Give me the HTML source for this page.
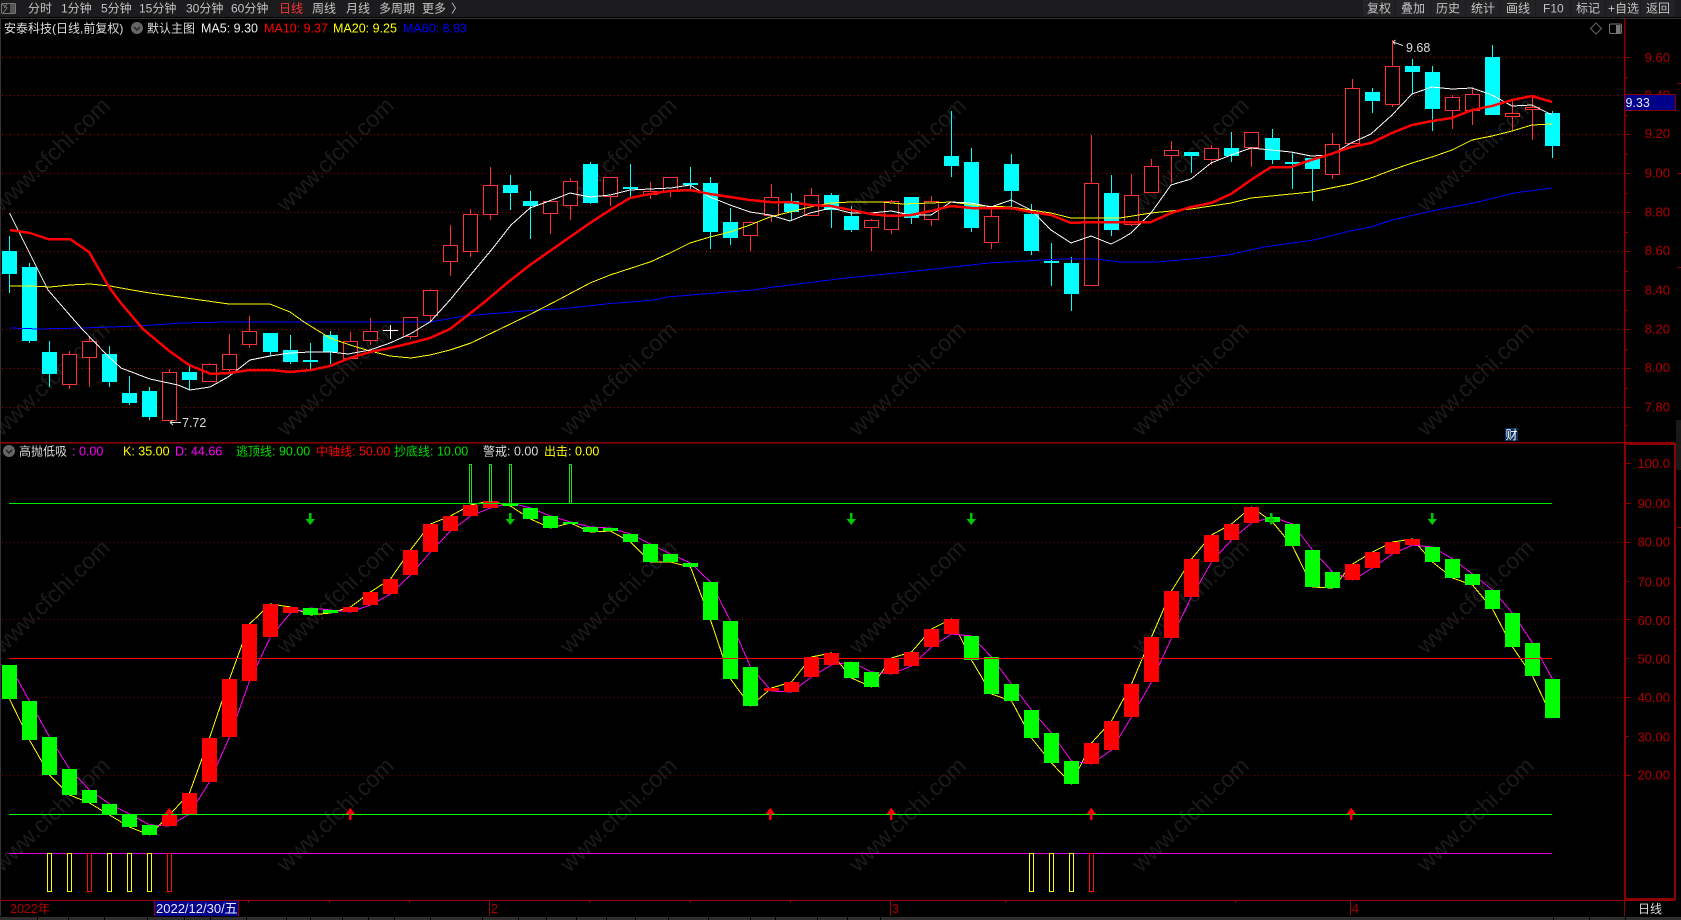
<!DOCTYPE html>
<html lang="zh-CN">
<head>
<meta charset="utf-8">
<title>安泰科技 日线</title>
<style>
html,body{margin:0;padding:0;background:#000;width:1681px;height:920px;overflow:hidden}
svg{display:block;font-family:"Liberation Sans","Noto Sans CJK SC",sans-serif}
.tb{font-size:12px;fill:#c4c4c4}
.ax{font-size:13px;fill:#b00000;text-anchor:end}
.wm{font-size:23px;fill:#1b1b1b}
.t{font-size:12.5px}
.c{font-size:12px}
</style>
</head>
<body>
<svg width="1681" height="920" viewBox="0 0 1681 920" xmlns="http://www.w3.org/2000/svg">
<rect width="1681" height="920" fill="#000"/>
<!-- watermarks -->
<g class="wm">
<text transform="translate(2,213) rotate(-44)">www.cfchi.com</text><text transform="translate(286,213) rotate(-44)">www.cfchi.com</text><text transform="translate(569,213) rotate(-44)">www.cfchi.com</text><text transform="translate(858,213) rotate(-44)">www.cfchi.com</text><text transform="translate(1141,213) rotate(-44)">www.cfchi.com</text><text transform="translate(1426,213) rotate(-44)">www.cfchi.com</text>
<text transform="translate(2,437) rotate(-44)">www.cfchi.com</text><text transform="translate(286,437) rotate(-44)">www.cfchi.com</text><text transform="translate(569,437) rotate(-44)">www.cfchi.com</text><text transform="translate(858,437) rotate(-44)">www.cfchi.com</text><text transform="translate(1141,437) rotate(-44)">www.cfchi.com</text><text transform="translate(1426,437) rotate(-44)">www.cfchi.com</text>
<text transform="translate(2,655) rotate(-44)">www.cfchi.com</text><text transform="translate(286,655) rotate(-44)">www.cfchi.com</text><text transform="translate(569,655) rotate(-44)">www.cfchi.com</text><text transform="translate(858,655) rotate(-44)">www.cfchi.com</text><text transform="translate(1141,655) rotate(-44)">www.cfchi.com</text><text transform="translate(1426,655) rotate(-44)">www.cfchi.com</text>
<text transform="translate(2,873) rotate(-44)">www.cfchi.com</text><text transform="translate(286,873) rotate(-44)">www.cfchi.com</text><text transform="translate(569,873) rotate(-44)">www.cfchi.com</text><text transform="translate(858,873) rotate(-44)">www.cfchi.com</text><text transform="translate(1141,873) rotate(-44)">www.cfchi.com</text><text transform="translate(1426,873) rotate(-44)">www.cfchi.com</text>
</g>
<!-- toolbar -->
<rect x="0" y="0" width="1681" height="17" fill="#1c1c1e"/>
<rect x="0" y="17" width="1681" height="1" fill="#000"/>
<rect x="0" y="18" width="1681" height="1" fill="#333"/>
<rect x="0" y="19" width="1" height="897" fill="#333"/>
<path d="M1363 0h31v17h-31zM1396 0h34v17h-34zM1431 0h34v17h-34zM1466 0h34v17h-34zM1501 0h34v17h-34zM1536 0h34v17h-34zM1571 0h34v17h-34zM1606 0h34v17h-34zM1641 0h34v17h-34z" fill="#232326"/>
<g fill="none" stroke="#777" stroke-width="1">
<rect x="1.5" y="3.5" width="14" height="10" rx="1"/>
<path d="M2 4l5 4-4 5M7 4l-3 4"/>
</g>
<rect x="10" y="4" width="5" height="9" fill="#555"/>
<g class="tb">
<text x="28" y="12.5">分时</text><text x="61" y="12.5">1分钟</text><text x="101" y="12.5">5分钟</text><text x="139" y="12.5">15分钟</text><text x="186" y="12.5">30分钟</text><text x="231" y="12.5">60分钟</text>
<text x="279" y="12.5" style="fill:#ff3232">日线</text><text x="312" y="12.5">周线</text><text x="346" y="12.5">月线</text><text x="379" y="12.5">多周期</text><text x="422" y="12.5">更多</text><text x="451" y="12.5">〉</text>
<text x="1367" y="12.5">复权</text><text x="1401" y="12.5">叠加</text><text x="1436" y="12.5">历史</text><text x="1471" y="12.5">统计</text><text x="1506" y="12.5">画线</text><text x="1543" y="12.5">F10</text><text x="1576" y="12.5">标记</text><text x="1608" y="12.5">+自选</text><text x="1646" y="12.5">返回</text>
</g>
<!-- title row -->
<text x="4" y="32.5" class="c" fill="#ddd">安泰科技(日线,前复权)</text>
<circle cx="137" cy="28" r="6" fill="#666"/><path d="M134 27l3 3 3-3" fill="none" stroke="#222" stroke-width="1.4"/>
<text x="147" y="32.5" class="c" fill="#ddd">默认主图</text>
<text x="201" y="32.5" class="t" fill="#eee">MA5: 9.30</text>
<text x="264" y="32.5" class="t" fill="#f00">MA10: 9.37</text>
<text x="333" y="32.5" class="t" fill="#ff0">MA20: 9.25</text>
<text x="403" y="32.5" class="t" fill="#00f">MA60: 8.93</text>
<path d="M1596 23l5.500 5.500-5.500 5.500-5.500-5.500z" fill="none" stroke="#666"/>
<rect x="1609.500" y="24" width="12" height="9.500" rx="1.500" fill="none" stroke="#777"/><rect x="1616" y="25" width="4.500" height="8" fill="#777"/>

<g shape-rendering="crispEdges">
<!-- upper grid -->
<path d="M2 57.500H1624M2 95.500H1624M2 134.500H1624M2 173.500H1624M2 212.500H1624M2 251.500H1624M2 290.500H1624M2 329.500H1624M2 368.500H1624M2 407.500H1624" stroke="#9a0000" stroke-dasharray="1 3" fill="none"/>
<!-- lower grid -->
<path d="M2 542.500H1624M2 619.500H1624M2 697.500H1624M2 775.500H1624" stroke="#7c0000" stroke-dasharray="1 3" fill="none"/>

<!-- cyan wicks -->
<path stroke="#0ff" fill="none" d="M9.500 236V293M29.500 263V343M49.500 341V387M109.500 346V387M129.500 376V405M149.500 387V420M189.500 366V390M270.500 333V356M290.500 335V364M310.500 343V369M330.500 331V364M510.500 175V210M530.500 191V239M590.500 162V204M630.500 164V199M690.500 167V190M710.500 177V249M730.500 208V245M791.500 193V221M831.500 193V228M851.500 206V232M911.500 197V224M951.500 111V177M971.500 148V232M1011.500 154V210M1031.500 204V255M1051.500 243V286M1071.500 257V311M1111.500 175V236M1191.500 152V173M1231.500 132V162M1272.500 129V164M1292.500 153V189M1312.500 158V201M1372.500 88V113M1412.500 59V94M1432.500 66V131M1492.500 45V115M1552.500 111V158"/>
<!-- cyan bodies -->
<path fill="#0ff" d="M2 251h15v23h-15zM22 267h15v74h-15zM42 352h15v22h-15zM102 354h15v28h-15zM122 393h15v10h-15zM142 391h15v26h-15zM182 372h15v8h-15zM263 333h15v19h-15zM283 350h15v12h-15zM303 360h15v2h-15zM323 335h15v17h-15zM503 185h15v8h-15zM523 201h15v5h-15zM583 164h15v39h-15zM623 187h15v2h-15zM683 183h15v2h-15zM703 183h15v49h-15zM723 222h15v16h-15zM784 201h15v11h-15zM824 195h15v15h-15zM844 216h15v14h-15zM904 197h15v21h-15zM944 156h15v10h-15zM964 162h15v66h-15zM1004 164h15v27h-15zM1024 214h15v37h-15zM1044 261h15v2h-15zM1064 263h15v31h-15zM1104 193h15v37h-15zM1184 152h15v4h-15zM1224 148h15v8h-15zM1265 138h15v22h-15zM1285 162h15v2h-15zM1305 158h15v11h-15zM1365 92h15v9h-15zM1405 66h15v6h-15zM1425 72h15v37h-15zM1485 57h15v58h-15zM1545 113h15v33h-15z"/>
<!-- red wicks -->
<path stroke="#ff3232" fill="none" d="M69.500 351V389M89.500 337V387M169.500 369V421M209.500 363V382M229.500 334V373M249.500 316V348M350.500 332V359M370.500 318V345M410.500 317V339M430.500 289V322M450.500 225V276M470.500 209V257M490.500 167V220M550.500 201V234M570.500 178V220M610.500 177V206M650.500 182V199M670.500 177V197M750.500 221V251M771.500 184V222M811.500 188V216M871.500 219V251M891.500 200V234M931.500 196V226M991.500 209V249M1091.500 135V286M1131.500 174V226M1151.500 159V193M1171.500 141V183M1211.500 145V165M1251.500 132V167M1332.500 133V179M1352.500 79V143M1392.500 40V107M1452.500 95V129M1472.500 88V125M1512.500 100V130M1532.500 97V140"/>
<!-- red bodies -->
<path fill="#000" stroke="#ff3232" d="M62.500 354.500h14v30h-14zM82.500 341.500h14v16h-14zM162.500 372.500h14v48h-14zM202.500 364.500h14v17h-14zM222.500 354.500h14v15h-14zM242.500 331.500h14v13h-14zM343.500 341.500h14v17h-14zM363.500 331.500h14v9h-14zM403.500 317.500h14v19h-14zM423.500 290.500h14v25h-14zM443.500 245.500h14v16h-14zM463.500 214.500h14v37h-14zM483.500 185.500h14v29h-14zM543.500 201.500h14v12h-14zM563.500 181.500h14v24h-14zM603.500 177.500h14v19h-14zM643.500 191.500h14v3h-14zM663.500 177.500h14v14h-14zM743.500 222.500h14v13h-14zM764.500 197.500h14v18h-14zM804.500 195.500h14v20h-14zM864.500 220.500h14v7h-14zM884.500 201.500h14v28h-14zM924.500 201.500h14v18h-14zM984.500 216.500h14v26h-14zM1084.500 183.500h14v102h-14zM1124.500 195.500h14v29h-14zM1144.500 166.500h14v26h-14zM1164.500 150.500h14v5h-14zM1204.500 148.500h14v11h-14zM1244.500 132.500h14v15h-14zM1325.500 144.500h14v30h-14zM1345.500 88.500h14v55h-14zM1385.500 66.500h14v38h-14zM1445.500 97.500h14v13h-14zM1465.500 94.500h14v16h-14zM1505.500 113.500h14v3h-14zM1525.500 107.500h14v2h-14z"/>
<!-- doji -->
<path stroke="#fff" fill="none" d="M383 330.500H398M390.500 325V339"/>

<!-- MA lines -->
<polyline fill="none" stroke="#0000ff" points="10,328 39,329 82,328 139,326 182,323 229,322 339,322 393,322 430,322 464,316 536,310 560,309 606,304 654,300 667,297 753,290 774,287 846,278 917,271 989,263 1060,259 1096,259 1120,262 1157,262 1192,259 1228,255 1264,247 1314,240 1350,231 1371,227 1392,220 1432,211 1478,202 1514,193 1552,188"/>
<polyline fill="none" stroke="#ffff00" points="10,286 30,286 50,287 70,285 90,284 110,286 132,290 150,293 179,297 229,304 270,304 290,312 304,322 330,338 350,345 370,351 390,356 411,358 430,355 450,350 471,343 500,329 529,315 560,299 590,283 610,275 650,262 670,253 690,243 710,237 730,232 750,225 770,217 790,212 810,207 831,203 851,202 881,202 903,204 931,203 951,202 981,206 1011,207 1031,210 1051,213 1071,218 1120,218 1151,213 1191,209 1211,206 1231,203 1251,198 1271,196 1311,192 1331,188 1351,184 1371,178 1392,170 1412,163 1432,157 1452,150 1472,140 1492,136 1512,131 1532,125 1552,124"/>
<polyline fill="none" stroke="#ffffff" points="9.500,213 30,254 48,290 68,313 82,329 107,355 121,368 150,379 178,385 190,390 210,387 228,377 250,360 270,356 290,353 310,352 330,352 348,354 370,350 390,343 410,334 430,322 450,300 468,278 493,248 511,225 530,208 560,197 570,193 590,197 610,195 630,190 650,189 671,188 690,185 710,197 730,205 750,212 770,215 790,221 810,213 831,208 851,213 871,213 891,211 911,215 931,215 951,202 971,203 991,207 1011,200 1031,210 1051,230 1071,243 1091,236 1111,244 1121,239 1131,233 1151,213 1171,185 1191,179 1211,163 1231,155 1251,148 1271,150 1291,152 1311,156 1331,155 1351,143 1371,134 1392,115 1412,94 1432,87 1452,89 1472,88 1492,95 1512,106 1532,105 1552,115"/>
<polyline fill="none" stroke="#ff0000" stroke-width="2.500" points="10,230 30,233 48,239 70,239 89,252 109,287 120,302 143,329 168,350 189,365 211,374 229,373 250,370 271,370 290,372 311,370 330,366 350,358 370,352 390,348 411,343 430,338 450,329 468,315 487,300 507,283 530,265 560,244 590,223 610,210 630,198 650,194 670,191 690,190 710,194 730,197 750,200 770,202 790,202 810,205 831,206 851,210 871,214 891,216 911,215 931,211 951,206 971,208 991,208 1011,208 1031,212 1051,215 1071,223 1091,222 1151,222 1171,213 1191,207 1211,203 1231,194 1251,180 1271,167 1291,167 1311,160 1331,154 1351,147 1371,143 1392,133 1412,125 1432,121 1452,118 1472,110 1492,106 1512,100 1532,96 1552,102"/>

<!-- lower KD lines -->
<polyline fill="none" stroke="#ffff00" points="9.500,699 29.500,740 49.500,775 69.500,795 89.500,803 109.500,815 129.500,827 149.500,835 169.500,815 189.500,793 209.500,738 229.500,679 249.500,624 270.500,604 290.500,607 310.500,615 330.500,613 350.500,607 370.500,592 390.500,579 410.500,550 430.500,524 450.500,516 470.500,505 490.500,501 510.500,506 530.500,519 550.500,528 570.500,523 590.500,532 610.500,531 630.500,542 650.500,562 670.500,562 690.500,567 710.500,620 730.500,679 750.500,706 771.500,688 791.500,682 811.500,657 831.500,653 851.500,678 871.500,687 891.500,658 911.500,652 931.500,629 951.500,619 971.500,660 991.500,694 1011.500,701 1031.500,738 1051.500,763 1071.500,784 1091.500,743 1111.500,721 1131.500,684 1151.500,637 1171.500,591 1191.500,559 1211.500,535 1231.500,524 1251.500,507 1272.500,522 1292.500,546 1312.500,587 1332.500,588 1352.500,564 1372.500,552 1392.500,542 1412.500,539 1432.500,562 1452.500,578 1472.500,585 1492.500,609 1512.500,647 1532.500,676 1552.500,718"/>
<polyline fill="none" stroke="#ff00ff" points="9.500,665 29.500,701 49.500,737 69.500,769 89.500,790 109.500,804 129.500,814 149.500,825 169.500,826 189.500,814 209.500,782 229.500,737 249.500,681 270.500,637 290.500,613 310.500,608 330.500,610 350.500,612 370.500,605 390.500,594 410.500,575 430.500,552 450.500,531 470.500,516 490.500,508 510.500,503 530.500,508 550.500,516 570.500,522 590.500,527 610.500,528 630.500,534 650.500,544 670.500,554 690.500,563 710.500,582 730.500,621 750.500,667 771.500,691 791.500,692 811.500,677 831.500,665 851.500,662 871.500,672 891.500,674 911.500,666 931.500,647 951.500,634 971.500,636 991.500,657 1011.500,684 1031.500,710 1051.500,733 1071.500,761 1091.500,764 1111.500,750 1131.500,717 1151.500,682 1171.500,638 1191.500,597 1211.500,562 1231.500,540 1251.500,523 1272.500,517 1292.500,524 1312.500,550 1332.500,572 1352.500,580 1372.500,568 1392.500,554 1412.500,545 1432.500,547 1452.500,559 1472.500,574 1492.500,590 1512.500,613 1532.500,643 1552.500,679"/>

<!-- lower green bodies -->
<path fill="#00ff00" d="M2 665h15v34h-15zM22 701h15v39h-15zM42 737h15v38h-15zM62 769h15v26h-15zM82 790h15v13h-15zM102 804h15v11h-15zM122 814h15v13h-15zM142 825h15v10h-15zM303 608h15v7h-15zM323 610h15v3h-15zM503 503h15v3h-15zM523 508h15v11h-15zM543 516h15v12h-15zM563 522h15v2h-15zM583 527h15v5h-15zM603 528h15v3h-15zM623 534h15v8h-15zM643 544h15v18h-15zM663 554h15v8h-15zM683 563h15v4h-15zM703 582h15v38h-15zM723 621h15v58h-15zM743 667h15v39h-15zM844 662h15v16h-15zM864 672h15v15h-15zM964 636h15v24h-15zM984 657h15v37h-15zM1004 684h15v17h-15zM1024 710h15v28h-15zM1044 733h15v30h-15zM1064 761h15v23h-15zM1265 517h15v5h-15zM1285 524h15v22h-15zM1305 550h15v37h-15zM1325 572h15v16h-15zM1425 547h15v15h-15zM1445 559h15v19h-15zM1465 574h15v11h-15zM1485 590h15v19h-15zM1505 613h15v34h-15zM1525 643h15v33h-15zM1545 679h15v39h-15z"/>
<!-- lower red bodies -->
<path fill="#ff0000" d="M162 815h15v11h-15zM182 793h15v21h-15zM202 738h15v44h-15zM222 679h15v58h-15zM242 624h15v57h-15zM263 604h15v33h-15zM283 607h15v6h-15zM343 607h15v5h-15zM363 592h15v13h-15zM383 579h15v15h-15zM403 550h15v25h-15zM423 524h15v28h-15zM443 516h15v15h-15zM463 505h15v11h-15zM483 501h15v7h-15zM764 688h15v3h-15zM784 682h15v10h-15zM804 657h15v20h-15zM824 653h15v12h-15zM884 658h15v16h-15zM904 652h15v14h-15zM924 629h15v18h-15zM944 619h15v15h-15zM1084 743h15v21h-15zM1104 721h15v29h-15zM1124 684h15v33h-15zM1144 637h15v45h-15zM1164 591h15v47h-15zM1184 559h15v38h-15zM1204 535h15v27h-15zM1224 524h15v16h-15zM1244 507h15v16h-15zM1345 564h15v16h-15zM1365 552h15v16h-15zM1385 542h15v12h-15zM1405 539h15v6h-15z"/>

<!-- horizontals -->
<path stroke="#00ee00" fill="none" d="M9 503.500H1552"/>
<path stroke="#ff0000" fill="none" d="M9 658.500H1552"/>
<path stroke="#00ff00" fill="none" d="M9 814.500H1552"/>
<path stroke="#e000e0" fill="none" d="M9 853.500H1552"/>

<!-- top bars -->
<path fill="#000" stroke="#20e020" d="M469.500 464.500h2v39h-2zM489.500 464.500h2v37h-2zM509.500 464.500h2v39h-2zM569.500 464.500h2v39h-2z"/>
<!-- bottom bars -->
<path fill="none" stroke="#ffff00" d="M47.500 853.500h4v38h-4zM67.500 853.500h4v38h-4zM107.500 853.500h4v38h-4zM127.500 853.500h4v38h-4zM147.500 853.500h4v38h-4zM1029.500 853.500h4v38h-4zM1049.500 853.500h4v38h-4zM1069.500 853.500h4v38h-4z"/>
<path fill="none" stroke="#ff1010" d="M87.500 853.500h4v38h-4zM167.500 853.500h4v38h-4zM1089.500 853.500h4v38h-4z"/>
</g>

<!-- arrows down -->
<g fill="#00c800">
<path d="M309 513h2.500v6h3.500l-4.750 6-4.750-6h3.500z"/>
<path d="M509 513h2.500v6h3.500l-4.750 6-4.750-6h3.500z"/>
<path d="M850 513h2.500v6h3.500l-4.750 6-4.750-6h3.500z"/>
<path d="M970 513h2.500v6h3.500l-4.750 6-4.750-6h3.500z"/>
<path d="M1270 513h2.500v6h3.500l-4.750 6-4.750-6h3.500z"/>
<path d="M1431 513h2.500v6h3.500l-4.750 6-4.750-6h3.500z"/>
</g>
<!-- arrows up -->
<g fill="#ff0000">
<path d="M168 820v-6h-3.500l4.750-6.300 4.750 6.300h-3.500v6z"/>
<path d="M349 820v-6h-3.500l4.750-6.300 4.750 6.300h-3.500v6z"/>
<path d="M769 820v-6h-3.500l4.750-6.300 4.750 6.300h-3.500v6z"/>
<path d="M890 820v-6h-3.500l4.750-6.300 4.750 6.300h-3.500v6z"/>
<path d="M1090 820v-6h-3.500l4.750-6.300 4.750 6.300h-3.500v6z"/>
<path d="M1350 820v-6h-3.500l4.750-6.300 4.750 6.300h-3.500v6z"/>
</g>

<!-- hi/lo labels -->
<path d="M1403 45.500l-10-3.500M1393 42l2.500-2M1393 42l2 2.500" fill="none" stroke="#ddd"/>
<text x="1406" y="52" class="t" fill="#ddd">9.68</text>
<path d="M181 422.500H170M170 422.500l3-2.500M170 422.500l3 2.500" fill="none" stroke="#ddd"/>
<text x="182" y="427" class="t" fill="#ddd">7.72</text>

<!-- hidden label behind price box -->
<text x="1670" y="99.500" class="ax">9.40</text>

<!-- frames -->
<g shape-rendering="crispEdges">
<rect x="0" y="442" width="1675" height="1.500" fill="#8b0000"/>
<rect x="1624" y="19" width="1.500" height="424" fill="#8b0000"/>
<path d="M1625 444H1675V899H1625Z" fill="none" stroke="#8b0000" stroke-width="2"/>
<path stroke="#8b0000" fill="none" d="M1625 57.500h5M1625 77.500h3M1625 95.500h5M1625 115.500h3M1625 134.500h5M1625 154.500h3M1625 173.500h5M1625 193.500h3M1625 212.500h5M1625 232.500h3M1625 251.500h5M1625 271.500h3M1625 290.500h5M1625 310.500h3M1625 329.500h5M1625 349.500h3M1625 368.500h5M1625 388.500h3M1625 407.500h5M1625 425.500h3M1626 463.500h5M1626 503.500h5M1626 542.500h5M1626 581.500h3M1626 619.500h5M1626 658.500h3M1626 697.500h5M1626 736.500h3M1626 775.500h5"/>
<path stroke="#8b0000" fill="none" d="M1677 83.500h4M1677 173.500h4M1677 267.500h4M1677 425.500h4M1677 447.500h4M1677 527.500h4"/>
<rect x="1676" y="420" width="5" height="50" fill="#1c1c1c" opacity=".9"/>
<rect x="1624" y="94" width="52" height="17" fill="#8b0000"/>
<rect x="1625" y="95" width="50" height="15" fill="#00008b"/>
<rect x="1505" y="428" width="13" height="13" fill="#0a3060"/>
<!-- bottom axis -->
<rect x="0" y="900" width="1675" height="1" fill="#990000"/>
<rect x="1624" y="900" width="1" height="16" fill="#8b0000"/>
<rect x="154" y="901" width="85" height="15" fill="#00008b"/>
<path stroke="#990000" fill="none" d="M154.500 901V916M238.500 901V916M489.500 901V916M890.500 901V916M1350.500 901V916M248.500 901v2M329.500 901v2M409.500 901v2M589.500 901v2M690.500 901v2M790.500 901v2M1005.500 901v2M1235.500 901v2"/>
<rect x="0" y="917" width="1681" height="3" fill="#2e2e2e"/>
<path stroke="#000" fill="none" d="M37.500 917v3M68.500 917v3M104.500 917v3M147.500 917v3M184.500 917v3M210.500 917v3M246.500 917v3M286.500 917v3M310.500 917v3M342.500 917v3M368.500 917v3M394.500 917v3M430.500 917v3M482.500 917v3M518.500 917v3M546.500 917v3M576.500 917v3M606.500 917v3M635.500 917v3M668.500 917v3M708.500 917v3M750.500 917v3M775.500 917v3M817.500 917v3M847.500 917v3M880.500 917v3M1553.500 917v3M1589.500 917v3M1625.500 917v3"/>
</g>
<text x="1505.500" y="439" font-size="12" fill="#fff">财</text>
<text x="1625.500" y="107" class="t" fill="#e8e8ff">9.33</text>

<!-- axis labels -->
<g class="ax">
<text x="1670" y="62">9.60</text><text x="1670" y="138">9.20</text><text x="1670" y="177.500">9.00</text><text x="1670" y="216.500">8.80</text><text x="1670" y="255">8.60</text><text x="1670" y="294.500">8.40</text><text x="1670" y="333.500">8.20</text><text x="1670" y="372">8.00</text><text x="1670" y="411.500">7.80</text>
<text x="1670" y="468">100.0</text><text x="1670" y="508">90.00</text><text x="1670" y="546.500">80.00</text><text x="1670" y="586.500">70.00</text><text x="1670" y="625">60.00</text><text x="1670" y="663.500">50.00</text><text x="1670" y="702">40.00</text><text x="1670" y="741.500">30.00</text><text x="1670" y="779.500">20.00</text>
</g>

<!-- second title row -->
<circle cx="9" cy="451" r="6" fill="#666"/><path d="M6 450l3 3 3-3" fill="none" stroke="#222" stroke-width="1.400"/>
<text x="19" y="455.500" class="c" fill="#ddd">高抛低吸</text>
<text x="72" y="455.500" class="t" fill="#f0f">:</text>
<text x="79" y="455.500" class="t" fill="#f0f">0.00</text>
<text x="123" y="455.500" class="t" fill="#ff0">K: 35.00</text>
<text x="175" y="455.500" class="t" fill="#f0f">D: 44.66</text>
<text x="236" y="455.500" class="t" fill="#00e000"><tspan class="c">逃顶线</tspan>: 90.00</text>
<text x="316" y="455.500" class="t" fill="#f00"><tspan class="c">中轴线</tspan>: 50.00</text>
<text x="394" y="455.500" class="t" fill="#00e000"><tspan class="c">抄底线</tspan>: 10.00</text>
<text x="483" y="455.500" class="t" fill="#ddd"><tspan class="c">警戒</tspan>: 0.00</text>
<text x="544" y="455.500" class="t" fill="#ff0"><tspan class="c">出击</tspan>: 0.00</text>

<!-- date row -->
<text x="10" y="913" class="t" fill="#b00000">2022年</text>
<text x="156" y="913" font-size="13" fill="#e8e8ff">2022/12/30/五</text>
<text x="491" y="913" class="t" fill="#b00000">2</text>
<text x="892" y="913" class="t" fill="#b00000">3</text>
<text x="1352" y="913" class="t" fill="#b00000">4</text>
<text x="1638" y="913" class="c" fill="#ddd">日线</text>
</svg>
</body>
</html>
